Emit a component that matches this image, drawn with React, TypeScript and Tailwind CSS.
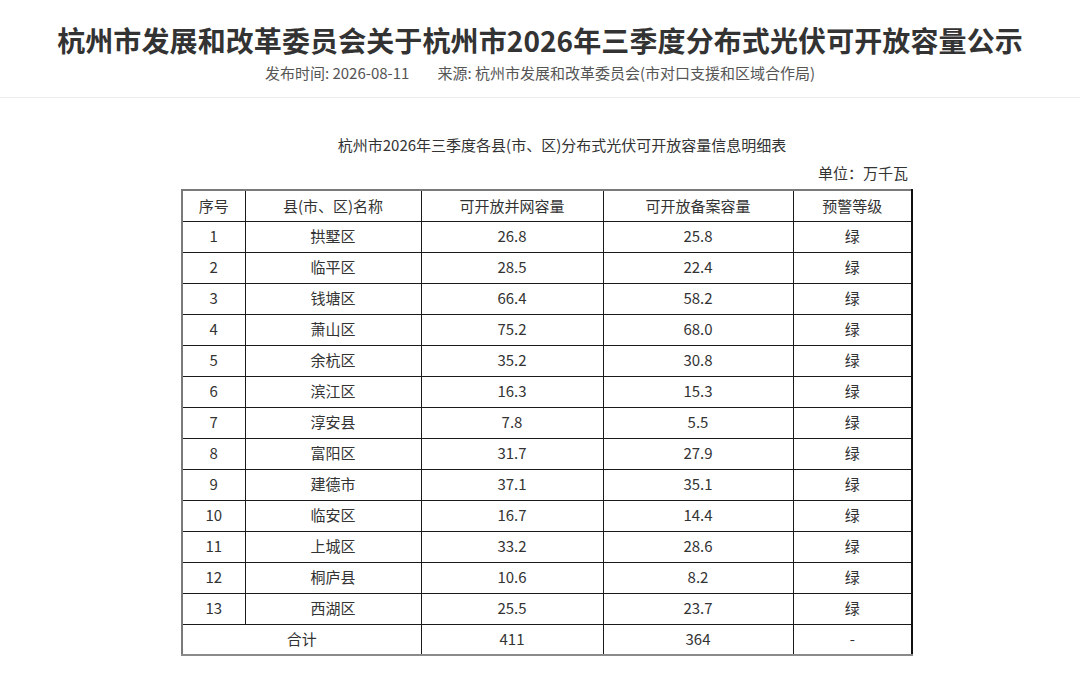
import React from "react";

const rows: [string, string, string, string, string][] = [
  ["1", "拱墅区", "26.8", "25.8", "绿"],
  ["2", "临平区", "28.5", "22.4", "绿"],
  ["3", "钱塘区", "66.4", "58.2", "绿"],
  ["4", "萧山区", "75.2", "68.0", "绿"],
  ["5", "余杭区", "35.2", "30.8", "绿"],
  ["6", "滨江区", "16.3", "15.3", "绿"],
  ["7", "淳安县", "7.8", "5.5", "绿"],
  ["8", "富阳区", "31.7", "27.9", "绿"],
  ["9", "建德市", "37.1", "35.1", "绿"],
  ["10", "临安区", "16.7", "14.4", "绿"],
  ["11", "上城区", "33.2", "28.6", "绿"],
  ["12", "桐庐县", "10.6", "8.2", "绿"],
  ["13", "西湖区", "25.5", "23.7", "绿"],
];

const cell = "border border-[#1a1a1a] text-center align-middle p-0";

export default function App() {
  return (
    <div
      className="w-[1080px] h-[691px] bg-white text-[#333] overflow-hidden"
      style={{ fontFamily: '"Noto Sans CJK SC", "Noto Sans", sans-serif' }}
    >
      <div className="pt-[20px] flex flex-col items-center">
        <h1 className="text-[28px] font-bold leading-[40px] text-[#333] tracking-[0.1px]">
          杭州市发展和改革委员会关于杭州市2026年三季度分布式光伏可开放容量公示
        </h1>
        <div className="mt-[3px] text-[15px] leading-[20px] text-[#555] flex gap-[28px]">
          <span>发布时间: 2026-08-11</span>
          <span>来源: 杭州市发展和改革委员会(市对口支援和区域合作局)</span>
        </div>
      </div>
      <div className="mt-[14px] border-t border-[#ececec]" />
      <div className="ml-[181px] w-[730px]">
        <div className="mt-[36px] pl-[32px] text-center text-[15px] leading-[22px] text-[#333]">
          杭州市2026年三季度各县(市、区)分布式光伏可开放容量信息明细表
        </div>
        <div className="mt-[6px] pr-[3px] text-right text-[15px] leading-[22px] text-[#333]">
          单位：万千瓦
        </div>
        <table
          className="mt-[5px] w-[730px] border-collapse table-fixed text-[15px] text-[#333] border-l-2 border-t-2 border-b-2 border-r-2 border-l-[#7a7a7a] border-t-[#7a7a7a] border-b-[#8a8a8a] border-r-[#111]"
        >
          <colgroup>
            <col className="w-[63px]" />
            <col className="w-[176px]" />
            <col className="w-[182px]" />
            <col className="w-[190px]" />
            <col className="w-[119px]" />
          </colgroup>
          <tbody>
            <tr className="h-[31px]">
              <td className={cell}>序号</td>
              <td className={cell}>县(市、区)名称</td>
              <td className={cell}>可开放并网容量</td>
              <td className={cell}>可开放备案容量</td>
              <td className={cell}>预警等级</td>
            </tr>
            {rows.map((r) => (
              <tr key={r[0]} className="h-[31px]">
                <td className={cell}>{r[0]}</td>
                <td className={cell}>{r[1]}</td>
                <td className={cell}>{r[2]}</td>
                <td className={cell}>{r[3]}</td>
                <td className={cell}>{r[4]}</td>
              </tr>
            ))}
            <tr className="h-[31px]">
              <td className={cell} colSpan={2}>
                合计
              </td>
              <td className={cell}>411</td>
              <td className={cell}>364</td>
              <td className={cell}>-</td>
            </tr>
          </tbody>
        </table>
      </div>
    </div>
  );
}
